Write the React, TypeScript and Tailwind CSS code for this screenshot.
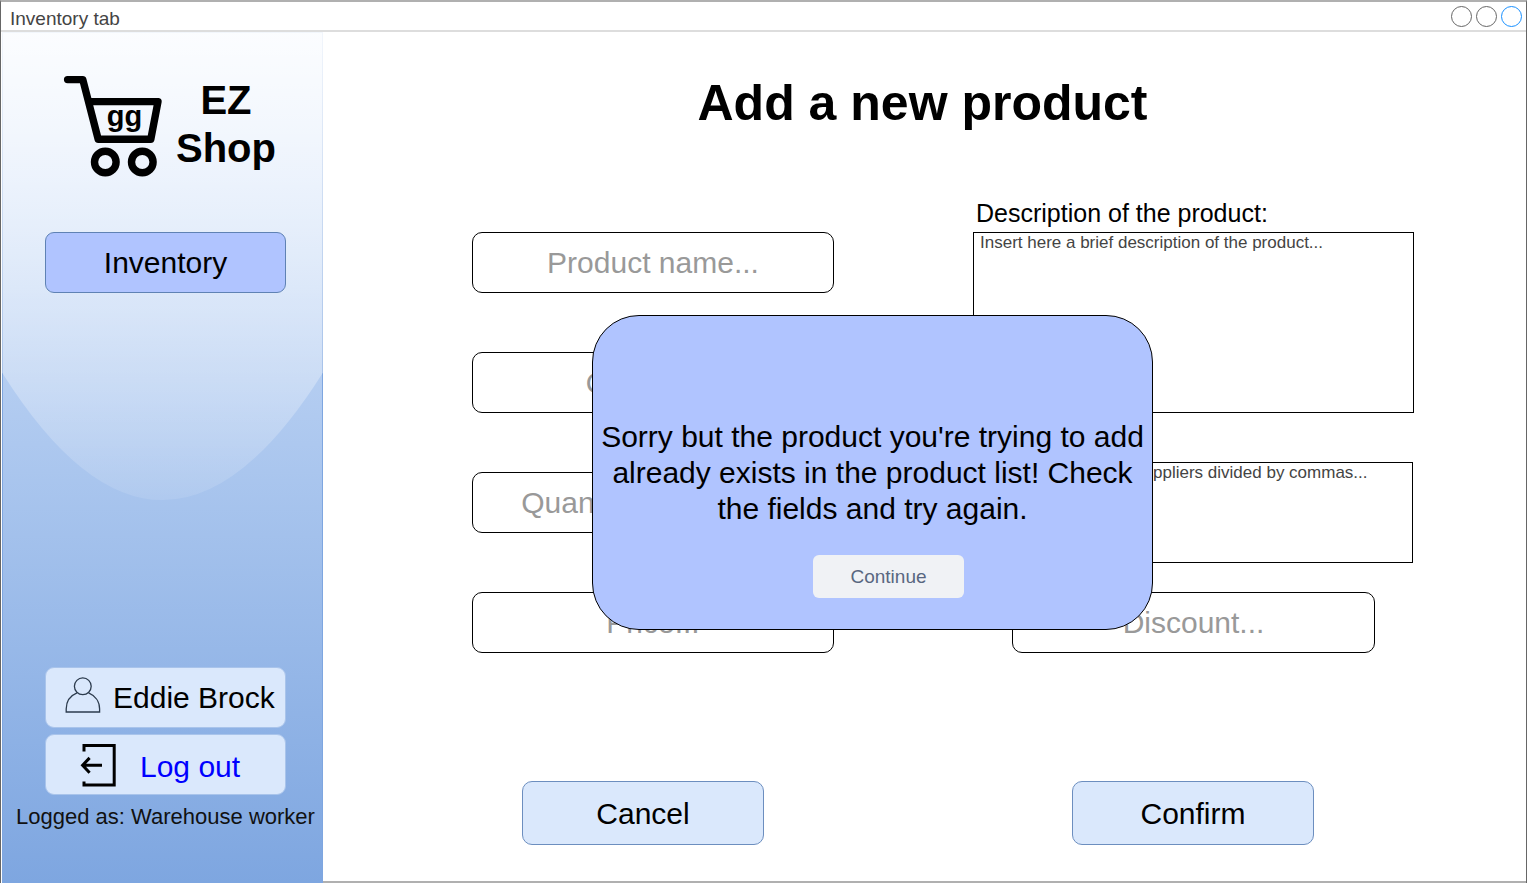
import React from "react";

const fieldClass =
  "block h-[61px] w-full rounded-[10px] border border-black bg-white text-center text-[30px] text-black outline-none placeholder:text-[#999999] placeholder:opacity-100";

const areaClass =
  "block w-full resize-none overflow-hidden border border-black bg-white py-0 pr-1.5 text-[17px] leading-5 text-black outline-none placeholder:text-[#444444] placeholder:opacity-100";

const actionClass =
  "h-16 w-[242px] rounded-[10px] border border-[#6c8ebf] bg-[#dae8fc] text-[30px] text-black";

const sideCardClass =
  "flex h-[61px] items-center rounded-[9px] border border-[#a9c4eb] bg-[#dae8fc] text-[30px]";

function Field({ label }: { label: string }) {
  return <input type="text" aria-label={label} placeholder={`${label}...`} className={fieldClass} />;
}

function CartLogo() {
  return (
    <svg width="100" height="104" viewBox="63 75 100 104" fill="none" stroke="#000" aria-hidden="true">
      <path
        d="M67.6 79.6H82.8L98.2 139.2H150.8L158 101.6H90"
        strokeWidth="7.4"
        strokeLinecap="round"
        strokeLinejoin="round"
      />
      <circle cx="105.3" cy="162" r="10.8" strokeWidth="7.4" />
      <circle cx="142.3" cy="162" r="10.8" strokeWidth="7.4" />
      <text x="124.5" y="126" textAnchor="middle" fontSize="29" fontWeight="700" fill="#000" stroke="none">
        gg
      </text>
    </svg>
  );
}

function UserIcon() {
  return (
    <svg width="36" height="36" viewBox="65 677 36 36" fill="none" stroke="#2c3b4d" strokeWidth="1.3" aria-hidden="true">
      <circle cx="82.8" cy="686.3" r="8.4" />
      <path d="M77 692.8C70.5 695.5 66.2 701.5 66.2 709V712H99.6V709C99.6 701.5 95 695.5 88.6 692.8" />
    </svg>
  );
}

function LogoutIcon() {
  return (
    <svg width="36" height="44" viewBox="80 743.5 36 44" fill="none" stroke="#000" strokeWidth="3" aria-hidden="true">
      <path d="M84 752V746H114.2V785.4H84V782" />
      <path d="M102 765.8H83M89.6 758.4L82.6 765.8L89.6 773.2" />
    </svg>
  );
}

function Sidebar() {
  return (
    <aside className="relative ml-px flex w-[321px] shrink-0 flex-col border border-[#7ea6e0] bg-linear-to-b from-[#dae8fc] to-[#7ea6e0] bg-origin-border">
      <svg
        className="absolute -top-px -left-px h-[calc(100%+2px)] w-[calc(100%+2px)]"
        viewBox="0 0 100 100"
        preserveAspectRatio="none"
        aria-hidden="true"
      >
        <defs>
          <linearGradient id="sheen" x1="0" y1="0" x2="0" y2="1">
            <stop offset="0" stopColor="#fff" stopOpacity="0.9" />
            <stop offset="1" stopColor="#fff" stopOpacity="0.1" />
          </linearGradient>
        </defs>
        <path d="M0 0V40Q50 70 100 40V0Z" fill="url(#sheen)" />
      </svg>

      <div className="relative flex grow flex-col pr-9 pl-[42px]">
        <div className="mt-[42px] flex items-start pl-[18px]">
          <CartLogo />
          <p className="mt-px ml-[13px] text-center text-[40px] leading-[48px] font-bold">
            EZ
            <br />
            Shop
          </p>
        </div>
        <nav className="mt-[53px]">
          <button
            type="button"
            className="h-[61px] w-full rounded-[9px] border border-[#5f82b4] bg-[#b0c4ff] text-[30px] text-black"
          >
            Inventory
          </button>
        </nav>
        <div className="mt-auto pb-[50px]">
          <div className={`${sideCardClass} pl-[19px]`}>
            <div className="-mt-1.5">
              <UserIcon />
            </div>
            <span className="ml-3 whitespace-nowrap">Eddie Brock</span>
          </div>
          <a href="#logout" className={`${sideCardClass} mt-1.5 pl-[34px] text-[#0000ff]`}>
            <LogoutIcon />
            <span className="ml-6 pt-1">Log out</span>
          </a>
          <p className="-mx-8 mt-[7px] text-center text-[22px] leading-[30px] whitespace-nowrap text-[#111111]">
            Logged as: Warehouse worker
          </p>
        </div>
      </div>
    </aside>
  );
}

function ErrorDialog() {
  return (
    <div
      role="alertdialog"
      aria-labelledby="dialog-message"
      className="absolute top-[283px] left-[269px] flex h-[315px] w-[561px] flex-col items-center rounded-[47px] border border-black bg-[#b0c4ff] pt-[103px]"
    >
      <p id="dialog-message" className="px-1 text-center text-[30px] leading-9">
        Sorry but the product you're trying to add already exists in the product list! Check the fields and try again.
      </p>
      <button
        type="button"
        className="mt-7 ml-8 h-[43px] w-[151px] rounded-md bg-[#f0f2f5] pt-0.5 text-[19px] text-[#596780]"
      >
        Continue
      </button>
    </div>
  );
}

export default function App() {
  return (
    <div className="flex min-h-screen flex-col border-t-2 border-r border-l border-t-[#b0b0b0] border-r-[#666666] border-l-[#666666] bg-white font-['Liberation_Sans',Arial,sans-serif] text-black">
      <header className="flex h-[30px] items-center justify-between border-b-2 border-[#dddddd] pr-1 pl-[9px]">
        <span className="pt-1.5 text-[19px] leading-6 text-[#444444]">Inventory tab</span>
        <div className="flex gap-1">
          <span className="size-[21px] rounded-full border border-[#666666]" />
          <span className="size-[21px] rounded-full border border-[#666666]" />
          <span className="size-[21px] rounded-full border border-[#1890ff]" />
        </div>
      </header>

      <div className="flex grow">
        <Sidebar />

        <main className="relative flex grow flex-col border-b-2 border-[#b0b0b0]">
          <h1 className="mt-[41px] pr-1 text-center text-[50px] leading-[60px] font-bold">Add a new product</h1>

          <form className="mt-[65px] pr-28 pl-[149px]">
            <div className="grid grid-cols-[362fr_441fr] gap-x-[139px]">
              <div className="flex flex-col gap-[59px] pt-[34px]">
                <Field label="Product name" />
                <Field label="Quantity" />
                <Field label="Quantity available" />
                <Field label="Price" />
              </div>
              <div className="flex flex-col">
                <label htmlFor="description" className="h-[34px] pl-[3px] text-[25px] leading-[30px]">
                  Description of the product:
                </label>
                <textarea
                  id="description"
                  placeholder="Insert here a brief description of the product..."
                  className={`${areaClass} h-[181px] pl-1.5`}
                />
                <div className="mt-[49px] pr-px">
                  <textarea
                    aria-label="Suppliers"
                    placeholder="Insert here possible suppliers divided by commas..."
                    className={`${areaClass} h-[101px] pl-2`}
                  />
                </div>
                <div className="mt-[29px] pr-[39px] pl-[39px]">
                  <Field label="Discount" />
                </div>
              </div>
            </div>
            <div className="mt-32 flex justify-between pr-[100px] pl-[50px]">
              <button type="button" className={actionClass}>
                Cancel
              </button>
              <button type="submit" className={actionClass}>
                Confirm
              </button>
            </div>
          </form>

          <ErrorDialog />
        </main>
      </div>
    </div>
  );
}
